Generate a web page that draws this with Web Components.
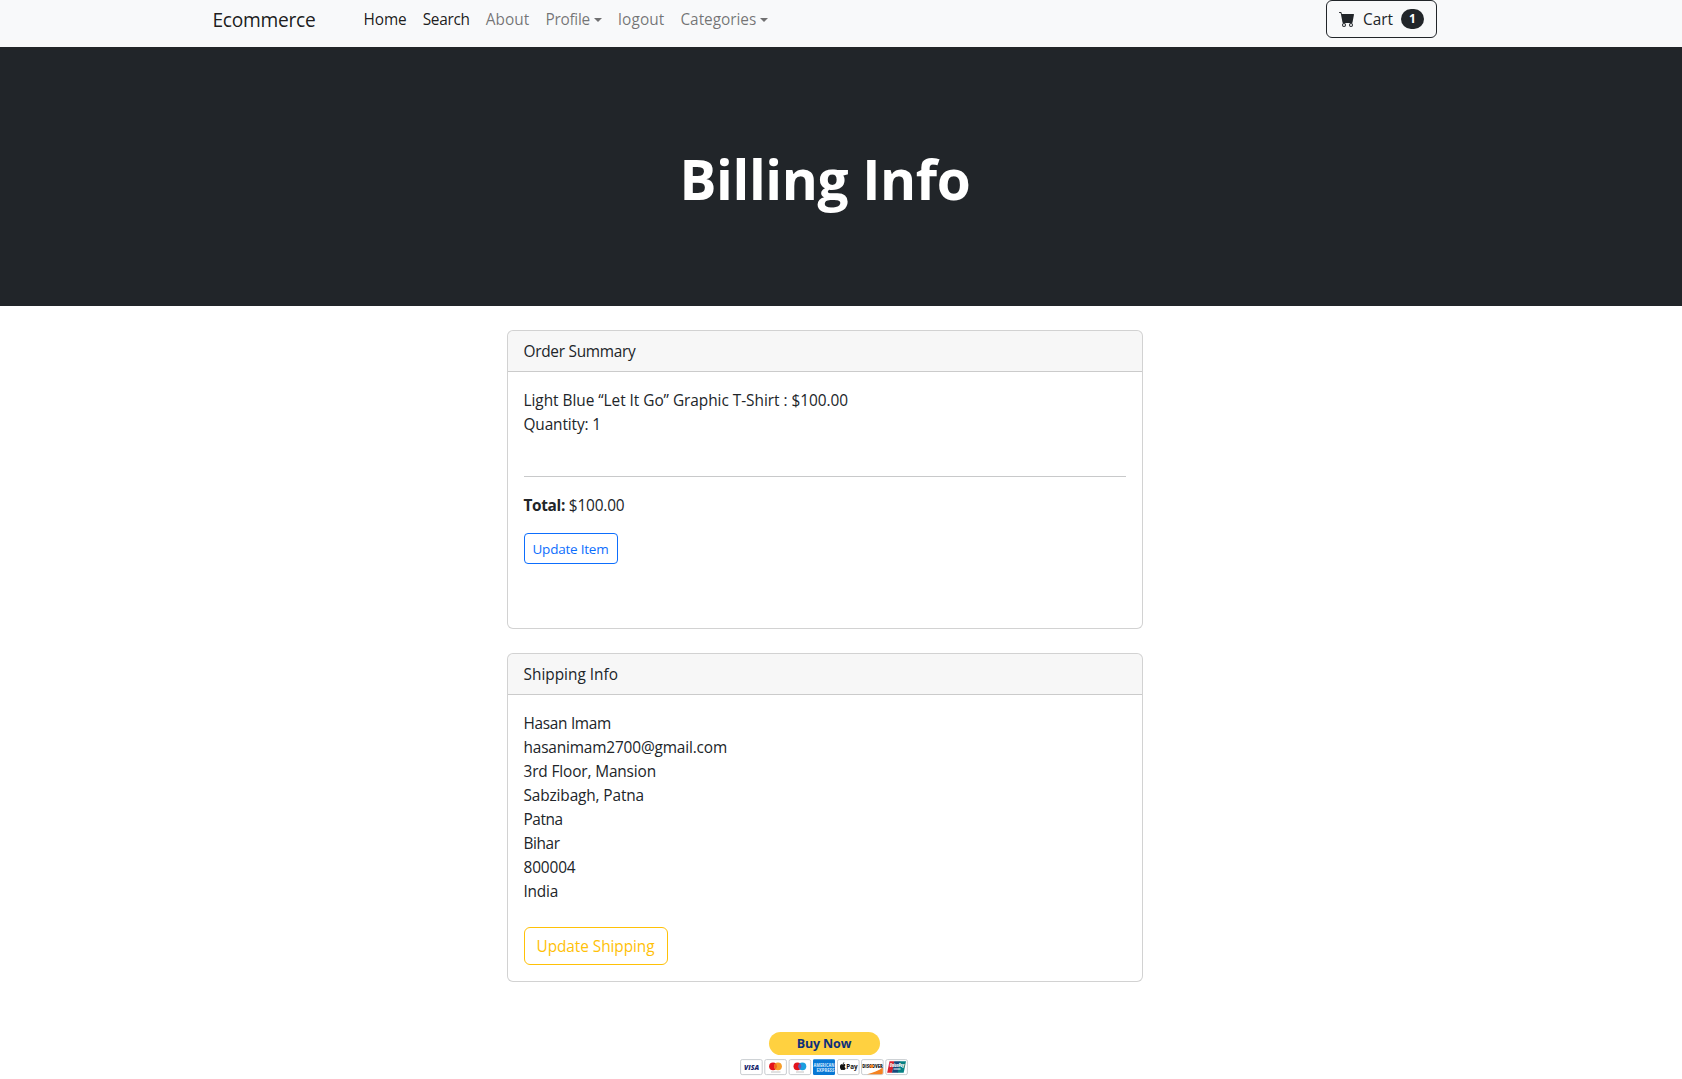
<!DOCTYPE html>
<html lang="en">
<head>
<meta charset="utf-8">
<title>Billing Info</title>
<style>
  body { margin: 0; background: #fff; color: #212529; font: 400 15.4px/24px "Open Sans", "Noto Sans", sans-serif; overflow: hidden; }
</style>
</head>
<body>
<billing-page></billing-page>
<script>
const define = (name, html, ready) => customElements.define(name, class extends HTMLElement {
  connectedCallback() {
    if (this.shadowRoot) return;
    this.attachShadow({ mode: 'open' }).innerHTML = html;
    if (ready) ready(this);
  }
});

/* A run of text tracked to a given advance width; --dx and --dy nudge the glyphs. */
define('fit-text', `<style>:host{display:inline-block;white-space:pre;text-align:left;transform:translate(var(--dx,0px),var(--dy,0px))}</style><slot></slot>`, el => {
  const w = parseFloat(el.getAttribute('w'));
  const natural = el.getBoundingClientRect().width;
  el.style.letterSpacing = ((w - natural) / el.textContent.length) + 'px';
  el.style.width = w + 'px';
});

define('nav-link', `<style>
  :host{display:flex;align-items:center;padding:8px;color:rgba(0,0,0,.55)}
  :host([active]){color:rgba(0,0,0,.9)}
  i{display:none}
  :host([dropdown]) i{display:block;margin-left:4.1px;border-top:4.8px solid;border-left:4.8px solid transparent;border-right:4.8px solid transparent}
</style><slot></slot><i></i>`);

define('ui-button', `<style>
  :host{display:inline-flex;align-items:center;justify-content:center;box-sizing:border-box;height:38px;padding:0 12px;border:1px solid currentColor;border-radius:6px}
  :host([variant=primary]){color:#0d6efd;height:31px;padding:0 8px;border-radius:4px;font-size:13.5px;line-height:21px}
  :host([variant=warning]){color:#ffc107}
  :host([variant=dark]){color:#212529}
</style><slot></slot>`);

define('cart-button', `<style>
  :host{display:block;--dy:1px}
  ui-button{width:111px;justify-content:flex-start}
  svg{display:block;width:16px;height:16px;margin-right:8px}
  b{display:flex;align-items:center;justify-content:center;width:23px;height:20px;border-radius:10px;margin-left:8px;background:#212529;color:#fff;font-size:12px;line-height:12px;font-weight:700}
</style><ui-button variant="dark"><svg viewBox="0 0 16 16" fill="currentColor"><path d="M0 1.5A.5.5 0 0 1 .5 1H2a.5.5 0 0 1 .485.379L2.89 3H14.5a.5.5 0 0 1 .491.592l-1.5 8A.5.5 0 0 1 13 12H4a.5.5 0 0 1-.491-.408L2.01 3.607 1.61 2H.5a.5.5 0 0 1-.5-.5M5 12a2 2 0 1 0 0 4 2 2 0 0 0 0-4m7 0a2 2 0 1 0 0 4 2 2 0 0 0 0-4m-7 1a1 1 0 1 1 0 2 1 1 0 0 1 0-2m7 0a1 1 0 1 1 0 2 1 1 0 0 1 0-2"/></svg><fit-text w="30">Cart</fit-text><b>1</b></ui-button>`);

define('nav-bar', `<style>
  :host{display:block;height:47px;background:#f8f9fa}
  .in{display:flex;align-items:flex-start;width:1224px;margin-left:213px}
  .brand{font-size:19.2px;line-height:30px;padding-top:5px;width:142px;color:rgba(0,0,0,.9);--dx:-.6px}
  nav{display:flex;--dx:.4px}
  cart-button{margin-left:auto}
</style><div class="in"><div class="brand"><fit-text w="103">Ecommerce</fit-text></div>
<nav>
<nav-link active><fit-text w="43.3">Home</fit-text></nav-link>
<nav-link active><fit-text w="47">Search</fit-text></nav-link>
<nav-link><fit-text w="43.7">About</fit-text></nav-link>
<nav-link dropdown><fit-text w="44.6">Profile</fit-text></nav-link>
<nav-link><fit-text w="46.4">logout</fit-text></nav-link>
<nav-link dropdown><fit-text w="75.8">Categories</fit-text></nav-link>
</nav><cart-button></cart-button></div>`);

define('hero-banner', `<style>
  :host{display:block;height:259px;box-sizing:border-box;padding:98px 32px 0 0;background:#212529;color:#fff;text-align:center}
  h1{margin:0;font-size:55px;line-height:67px;font-weight:700}
</style><h1><slot></slot></h1>`);

define('info-card', `<style>
  :host{display:flex;flex-direction:column;box-sizing:border-box;width:636px;border:1px solid rgba(0,0,0,.175);border-radius:6px;background:#fff;--dx:-.5px;--dy:1px}
  header{padding:8px 16px;height:24px;background:rgba(33,37,41,.035);border-bottom:1px solid rgba(0,0,0,.175);border-radius:5px 5px 0 0}
  .body{padding:16px;flex:1}
</style><header><slot name="title"></slot></header><div class="body"><slot></slot></div>`);

define('pay-marks', `<style>
  :host{display:block;width:168px}
  svg{display:block;overflow:visible}
  text{font-family:"Open Sans",sans-serif;font-weight:800}
</style><svg width="168" height="17" viewBox="0 0 168 17">
<g fill="#fff" stroke="#c3c7cc" stroke-width=".9">
<rect x=".6" y=".6" width="21.6" height="15" rx="1.6"/><rect x="24.8" y=".6" width="21.6" height="15" rx="1.6"/><rect x="49.1" y=".6" width="21.6" height="15" rx="1.6"/><rect x="97.5" y=".6" width="21.6" height="15" rx="1.6"/><rect x="121.6" y=".6" width="21.6" height="15" rx="1.6"/><rect x="145.8" y=".6" width="21.6" height="15" rx="1.6"/></g>
<text x="4" y="10.6" font-size="6.6" font-style="italic" fill="#15246b" textLength="15" lengthAdjust="spacingAndGlyphs">VISA</text>
<circle cx="33" cy="7.3" r="3.9" fill="#e3131c"/><circle cx="38" cy="7.3" r="3.9" fill="#f79e2a"/><path d="M35.5 4.3a3.9 3.9 0 0 1 0 6 3.9 3.9 0 0 1 0-6" fill="#f2681f"/><path d="M31 13h9.5" stroke="#aaa" stroke-width=".7"/>
<circle cx="57.4" cy="7.3" r="3.9" fill="#e3131c"/><circle cx="62.4" cy="7.3" r="3.9" fill="#1a9fe0"/><path d="M59.9 4.3a3.9 3.9 0 0 1 0 6 3.9 3.9 0 0 1 0-6" fill="#6c57b1"/><path d="M56 13h8" stroke="#aaa" stroke-width=".7"/>
<rect x="73" y=".3" width="22" height="15.6" rx="1.2" fill="#0878d4"/>
<text x="73.6" y="7.6" font-size="4.6" fill="#b9dcf8" textLength="20.8" lengthAdjust="spacingAndGlyphs">AMERICAN</text><text x="76.4" y="12.6" font-size="4.6" fill="#b9dcf8" textLength="18" lengthAdjust="spacingAndGlyphs">EXPRESS</text>
<path d="M102.8 4.9c0-1 .7-1.6 1.5-1.7 0 1-.7 1.6-1.5 1.7M104.9 5.3c-.9-.5-1.5.1-2 .1-.6 0-1-.3-1.7-.1-1.9.8-1.4 4.8.2 5.7.6.3.9-.2 1.5-.2s.9.5 1.5.2c.7-.4 1.1-1.2 1.3-1.8-1.3-.7-1.4-2.2-.3-3-.1-.4-.3-.7-.5-.9" fill="#111"/>
<text x="106.2" y="10.3" font-size="7.4" style="font-weight:700" fill="#111" textLength="11.4" lengthAdjust="spacingAndGlyphs">Pay</text>
<path d="M142.8 8.5v5.2q0 1.5-1.5 1.5H127c6-1.4 11.5-3.5 15.8-6.7" fill="#f58220"/>
<text x="122.3" y="8.9" font-size="4.7" fill="#222" textLength="20.4" lengthAdjust="spacingAndGlyphs">DISCOVER</text><circle cx="131.7" cy="7.2" r="1.8" fill="#f58220"/>
<path d="M149.5 2.3h5l-2.300 11.4h-5z" fill="#d8232f"/><path d="M154.3 2.3h6l-2.300 11.4h-6z" fill="#16487d"/><path d="M159.8 2.3h6.2l-2.300 11.4h-6.200z" fill="#078184"/>
<text x="149.7" y="7.6" font-size="4.5" fill="#fff" font-style="italic" textLength="14.5" lengthAdjust="spacingAndGlyphs">UnionPay</text><path d="M153.5 10h7" stroke="#fff" stroke-width="1"/>
</svg>`);

define('buy-now', `<style>
  :host{display:flex;flex-direction:column;align-items:center;width:168px;gap:4px}
  .b{display:flex;align-items:center;justify-content:center;width:111px;height:23px;border-radius:12px;background:#ffd140;color:#0c2f7c;font-weight:700;font-size:12.5px;line-height:23px}
</style><div class="b"><fit-text w="54.5">Buy Now</fit-text></div><pay-marks></pay-marks>`);

define('billing-page', `<style>
  :host{display:block}
  main{display:flex;flex-direction:column;align-items:center;padding:24px 32px 0 0}
  .one{height:299px;margin-bottom:24px}
  .two{height:329px;margin-bottom:50px}
  hr{border:0;height:1px;background:#c8c9ca;margin:40px 0 16px}
  .row{display:block;height:24px}
  .total{margin-bottom:16px}
  .gap{margin-top:24px}
  buy-now{margin-right:2px}
  b{font-weight:700}
</style>
<nav-bar></nav-bar>
<hero-banner><fit-text w="291">Billing Info</fit-text></hero-banner>
<main>
<info-card class="one"><fit-text slot="title" w="112">Order Summary</fit-text>
<div class="row"><fit-text w="324.5">Light Blue “Let It Go” Graphic T-Shirt : $100.00</fit-text></div>
<div class="row"><fit-text w="77.5">Quantity: 1</fit-text></div>
<hr>
<div class="row total"><b><fit-text w="41.5">Total:</fit-text></b><fit-text w="59.5"> $100.00</fit-text></div>
<ui-button variant="primary"><fit-text w="76">Update Item</fit-text></ui-button>
</info-card>
<info-card class="two"><fit-text slot="title" w="94.5">Shipping Info</fit-text>
<div class="row"><fit-text w="87.5">Hasan Imam</fit-text></div>
<div class="row"><fit-text w="203.5">hasanimam2700@gmail.com</fit-text></div>
<div class="row"><fit-text w="132.5">3rd Floor, Mansion</fit-text></div>
<div class="row"><fit-text w="120.5">Sabzibagh, Patna</fit-text></div>
<div class="row"><fit-text w="39">Patna</fit-text></div>
<div class="row"><fit-text w="36">Bihar</fit-text></div>
<div class="row"><fit-text w="52">800004</fit-text></div>
<div class="row"><fit-text w="34.5">India</fit-text></div>
<ui-button variant="warning" class="gap"><fit-text w="118">Update Shipping</fit-text></ui-button>
</info-card>
<buy-now></buy-now>
</main>`);
</script>
</body>
</html>
